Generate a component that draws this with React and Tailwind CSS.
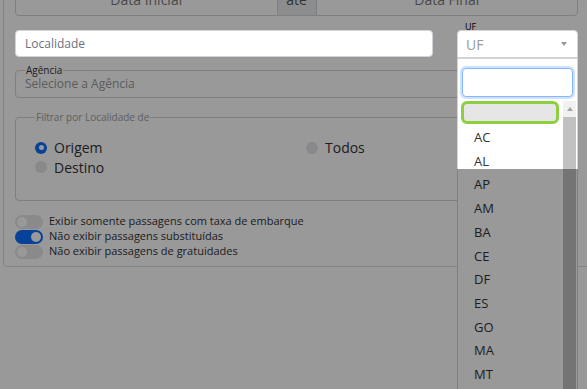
import React from 'react';

const ufs = ['AC', 'AL', 'AP', 'AM', 'BA', 'CE', 'DF', 'ES', 'GO', 'MA', 'MT', 'MS', 'MG'];

const Radio = ({ checked, label }) => (
  <label className="flex items-center gap-[7px] h-[19.5px]">
    {checked ? (
      <span className="w-[12px] h-[12px] rounded-full bg-[#0d6efd] flex items-center justify-center">
        <span className="w-[5px] h-[5px] rounded-full bg-white" />
      </span>
    ) : (
      <span className="w-[12px] h-[12px] rounded-full bg-[#e4e4e8]" />
    )}
    <span className="text-[14px] text-[#333]">{label}</span>
  </label>
);

const Toggle = ({ on, label }) => (
  <div className="flex items-center gap-[6px] h-[15px]">
    <span
      className={`w-[28px] h-[14px] rounded-full flex items-center px-[2px] ${
        on ? 'bg-[#0d6efd] justify-end' : 'bg-[#e6e6e6] justify-start'
      }`}
    >
      <span className="w-[10px] h-[10px] rounded-full bg-white" />
    </span>
    <span className="text-[11px] text-[#333]">{label}</span>
  </div>
);

export default function App() {
  return (
    <div className="relative w-full h-[389px] overflow-hidden bg-white font-['Open_Sans',sans-serif]">
      {/* Card */}
      <div className="ml-[3px] w-[587px] -mt-[34px] border border-[#dcdcdc] rounded-[4px] px-[11px] pt-[15px] pb-[7px]">
        {/* Period */}
        <div className="flex h-[34px] text-[14px] text-[#7a7a7a]">
          <div className="flex-1 border border-[#d4d4d4] rounded-l-[4px] flex items-center justify-center">Data Inicial</div>
          <div className="w-[38px] bg-[#e9ecef] border-y border-[#d4d4d4] flex items-center justify-center text-[#555]">até</div>
          <div className="flex-1 border border-[#d4d4d4] rounded-r-[4px] flex items-center justify-center">Data Final</div>
        </div>

        {/* Localidade + UF */}
        <div className="flex gap-[24px] mt-[14px]">
          <div className="relative z-20 flex-1 h-[27px] bg-white border border-[#ced4da] rounded-[4px] flex items-center px-[9px] text-[12px] text-[#6c6f7d]">
            Localidade
          </div>
          <div className="relative w-[121px]">
            <span className="absolute -top-[8px] left-[8px] text-[9px] leading-[9px] text-black">UF</span>
            <div className="relative z-20 h-[28px] bg-white border border-[#d4d4d4] rounded-t-[4px] flex items-center justify-between pl-[8px] pr-[10px]">
              <span className="text-[14px] text-[#9a9a9a]">UF</span>
              <span className="w-0 h-0 border-l-[3.5px] border-r-[3.5px] border-t-[4px] border-l-transparent border-r-transparent border-t-[#999]" />
            </div>
            {/* Dropdown */}
            <div className="absolute top-full left-0 right-0 z-20 h-[340px] bg-white border border-[#d4d4d4] rounded-b-[4px]">
              <div className="px-[4px] pt-[9px]">
                <div className="h-[29px] bg-white border border-[#86b7fe] rounded-[4px] shadow-[0_0_0_2px_rgba(13,110,253,0.2)]" />
              </div>
              <div className="flex mt-[4px] pl-[3px]">
                <div className="flex-1 text-[13px] text-[#333]">
                  <div className="h-[23px] border-[3px] border-[#8cd03f] rounded-[6px] bg-[#e6e6e6]" />
                  <div className="pt-[2px]">
                    {ufs.map((uf) => (
                      <div key={uf} className="h-[23.7px] flex items-center pl-[13px]">
                        {uf}
                      </div>
                    ))}
                  </div>
                </div>
                <div className="w-[13px] ml-[4px] mr-[1px] flex flex-col">
                  <div className="h-[16px] bg-[#f1f1f1] flex items-center justify-center">
                    <span className="w-0 h-0 border-l-[3.5px] border-r-[3.5px] border-b-[4px] border-l-transparent border-r-transparent border-b-[#a3a3a3]" />
                  </div>
                  <div className="h-[400px] bg-[#c1c1c1]" />
                </div>
              </div>
              <div className="absolute left-[-1px] right-[-1px] top-[110px] bottom-[-1px] bg-black/40" />
            </div>
          </div>
        </div>

        {/* Agência */}
        <fieldset className="mt-[6px] border border-[#d4d4d4] rounded-[4px] px-[9px]">
          <legend className="text-[10px] leading-[12px] text-[#333] px-[1px]">Agência</legend>
          <div className="text-[12px] leading-[16px] pb-[5px] text-[#9a9a9a]">Selecione a Agência</div>
        </fieldset>

        {/* Filtro */}
        <fieldset className="mt-[13px] border border-[#d4d4d4] rounded-[4px] px-[19px] pt-[15px] pb-[23px]">
          <legend className="text-[10px] leading-[12px] text-[#9e9e9e] px-[1px]">Filtrar por Localidade de</legend>
          <div className="grid grid-cols-[271px_1fr]">
            <div>
              <Radio checked label="Origem" />
              <Radio label="Destino" />
            </div>
            <div>
              <Radio label="Todos" />
            </div>
          </div>
        </fieldset>

        {/* Toggles */}
        <div className="mt-[13px]">
          <Toggle label="Exibir somente passagens com taxa de embarque" />
          <Toggle on label="Não exibir passagens substituídas" />
          <Toggle label="Não exibir passagens de gratuidades" />
        </div>
      </div>

      {/* Tour overlay */}
      <div className="absolute inset-0 z-10 bg-black/40" />
    </div>
  );
}
